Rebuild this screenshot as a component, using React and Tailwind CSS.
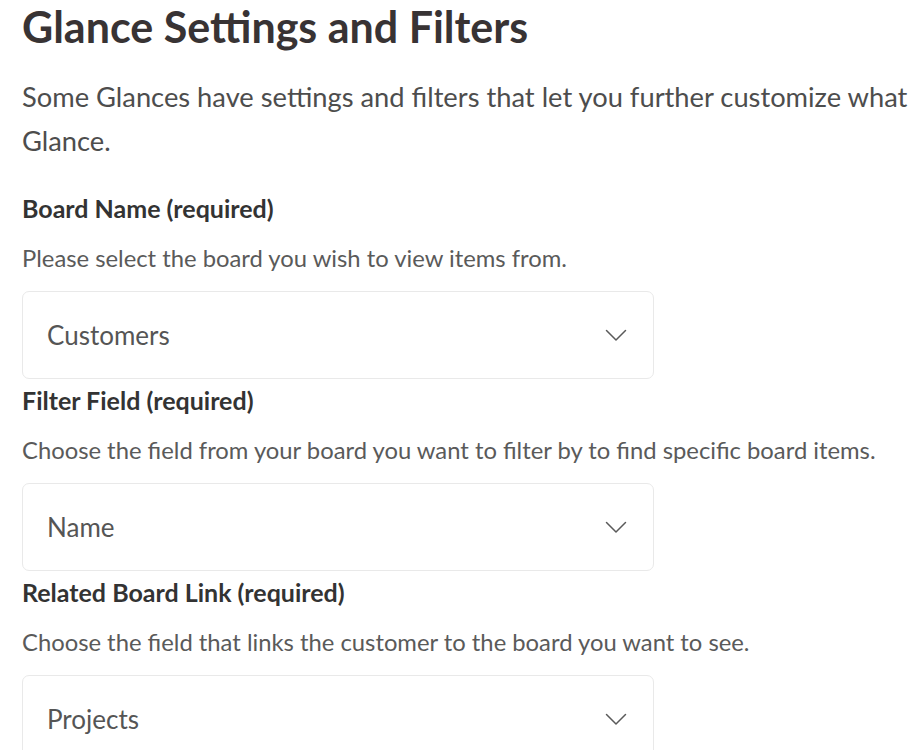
import { useState } from 'react';

const fields = [
  {
    id: 'board',
    label: 'Board Name (required)',
    help: 'Please select the board you wish to view items from.',
    value: 'Customers',
  },
  {
    id: 'filter',
    label: 'Filter Field (required)',
    help: 'Choose the field from your board you want to filter by to find specific board items.',
    value: 'Name',
  },
  {
    id: 'link',
    label: 'Related Board Link (required)',
    help: 'Choose the field that links the customer to the board you want to see.',
    value: 'Projects',
  },
];

function Chevron() {
  return (
    <svg width="22" height="13" viewBox="0 0 22 13" fill="none" stroke="#5a5a5a" strokeWidth="1.5" strokeLinecap="round" strokeLinejoin="round">
      <path d="M1.5 1.5 L11 11 L20.5 1.5" />
    </svg>
  );
}

function SelectBox({ value }) {
  return (
    <button className="w-[632px] h-[88px] flex items-center justify-between pl-[24px] pr-[26px] border border-[#e9e9e9] rounded-[7px] bg-white text-left">
      <span className="text-[26px] text-[#555]">{value}</span>
      <Chevron />
    </button>
  );
}

export default function App() {
  const [values] = useState(fields);

  return (
    <div className="min-h-screen bg-white pl-[22px] font-['Lato',sans-serif] overflow-hidden">
      {/* Title */}
      <h1 className="pt-[3px] h-[52px] leading-[48px] text-[43px] font-bold text-[#383334]">
        Glance Settings and Filters
      </h1>

      {/* Intro */}
      <p className="mt-[23px] text-[27.3px] leading-[44px] text-[#4d4d4d] w-[890px]">
        Some Glances have settings and filters that let you further customize what Glance.
      </p>

      {/* Fields */}
      <div className="mt-[31px]">
        {values.map((f) => (
          <div key={f.id} className="mb-[7px]">
            <div className="h-[28px] leading-[28px] text-[25px] font-bold text-[#333]">{f.label}</div>
            <div className="mt-[21px] h-[30px] leading-[30px] text-[23.8px] text-[#5a5a5a]">{f.help}</div>
            <div className="mt-[18px]">
              <SelectBox value={f.value} />
            </div>
          </div>
        ))}
      </div>
    </div>
  );
}
